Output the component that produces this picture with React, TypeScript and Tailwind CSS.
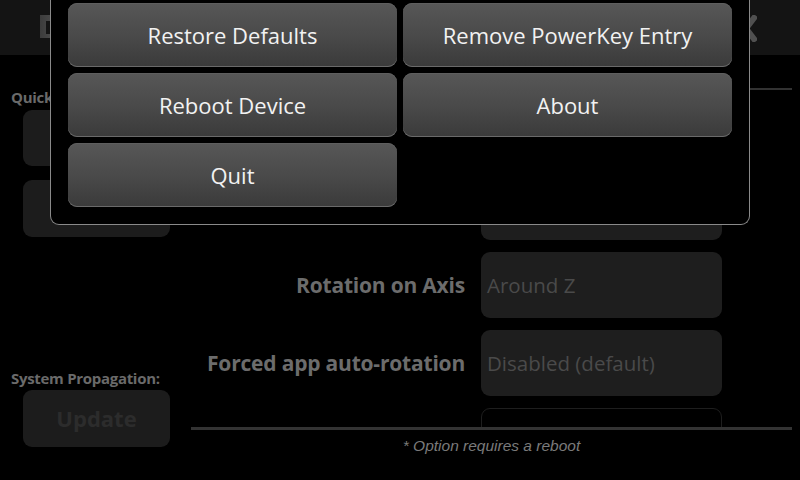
import React from "react";

function MenuButton({ label }: { label: string }) {
  return (
    <div className="h-[64px] rounded-[9px] bg-linear-to-b from-[#575757] via-[#4a4a4a] to-[#3a3a3a] shadow-[inset_0_-1px_0_#6a6a6a,inset_0_1px_0_#5e5e5e] flex items-center justify-center text-[22px] text-[#f2f2f2] leading-none">
      {label}
    </div>
  );
}

function Row({ label, value, variant = "filled" }: { label?: string; value?: string; variant?: "filled" | "outline" }) {
  return (
    <div className="flex items-center shrink-0 pr-[70px]">
      <div className="flex-1 text-right text-[21px] font-bold text-[#6c6c6c] tracking-[-0.2px] leading-none">{label}</div>
      <div
        className={
          variant === "filled"
            ? "ml-[16px] w-[241px] h-[66px] rounded-[9px] bg-[#1e1e1e] flex items-center pl-[6px] text-[20.5px] text-[#4a4a4a] leading-none"
            : "ml-[16px] w-[241px] h-[66px] rounded-[9px] bg-black border border-[#1e1e1e]"
        }
      >
        {value}
      </div>
    </div>
  );
}

export default function App() {
  return (
    <div className="relative w-[800px] h-[480px] bg-black overflow-hidden font-['Open_Sans',sans-serif]">
      {/* Header */}
      <div className="h-[55px] bg-[#141414] flex items-start justify-between">
        <svg className="ml-[40px] mt-[15px]" width="24" height="23" viewBox="0 0 24 23">
          <defs>
            <linearGradient id="ic" x1="0" x2="1" y1="0" y2="0">
              <stop offset="0" stopColor="#3c3c3c" />
              <stop offset="1" stopColor="#575757" />
            </linearGradient>
          </defs>
          <path d="M0 0 H24 V23 H0 Z M6 6 V19 H24 V6 Z" fill="url(#ic)" fillRule="evenodd" />
        </svg>
        <svg className="mr-[43px] mt-[15px]" width="22" height="27" viewBox="0 0 22 27">
          <path d="M3 3 L19 24 M19 3 L3 24" stroke="#505050" strokeWidth="6" strokeLinecap="square" />
        </svg>
      </div>

      {/* Main */}
      <div className="flex">
        {/* Left column */}
        <div className="w-[191px] flex flex-col">
          <div className="mt-[32px] pl-[11px] text-[15px] font-bold text-[#6a6a6a] leading-[20px] tracking-[-0.3px]">Quick Settings:</div>
          <div className="ml-[23px] w-[147px] h-[56px] mt-[3px] rounded-[9px] bg-[#1c1c1c]" />
          <div className="ml-[23px] w-[147px] h-[57px] mt-[14px] rounded-[9px] bg-[#1c1c1c]" />
          <div className="mt-[131px] pl-[11px] text-[15px] font-bold text-[#6a6a6a] leading-[20px] tracking-[-0.3px]">System Propagation:</div>
          <div className="ml-[23px] w-[147px] h-[57px] mt-[2px] rounded-[9px] bg-[#1c1c1c] flex items-center justify-center text-[22px] font-bold text-[#2c2c2c]">
            Update
          </div>
        </div>

        {/* Right column */}
        <div className="w-[601px] flex flex-col">
          <div className="mt-[33px] h-[2px] bg-[#323232]" />
          <div className="h-[337px] overflow-hidden pt-[6px] flex flex-col gap-[12px]">
            <Row label="Sensor polling*" value="Enabled" />
            <Row label="Orientation lock" value="Landscape" />
            <Row label="Rotation on Axis" value="Around Z" />
            <Row label="Forced app auto-rotation" value="Disabled (default)" />
            <Row variant="outline" />
          </div>
          <div className="h-[3px] bg-[#333333]" />
          <div className="mt-[6px] text-center text-[15.5px] italic text-[#7a7a7a] leading-[20px] font-['Liberation_Sans',sans-serif]">
            * Option requires a reboot
          </div>
        </div>
      </div>

      {/* Menu dialog overlay */}
      <div className="absolute left-[50px] top-0 w-[700px] bg-black border border-t-0 border-[#8a8a8a] rounded-b-[9px] pt-[3px] px-[17px] pb-[17px] grid grid-cols-2 gap-[6px]">
        <MenuButton label="Restore Defaults" />
        <MenuButton label="Remove PowerKey Entry" />
        <MenuButton label="Reboot Device" />
        <MenuButton label="About" />
        <MenuButton label="Quit" />
      </div>
    </div>
  );
}
